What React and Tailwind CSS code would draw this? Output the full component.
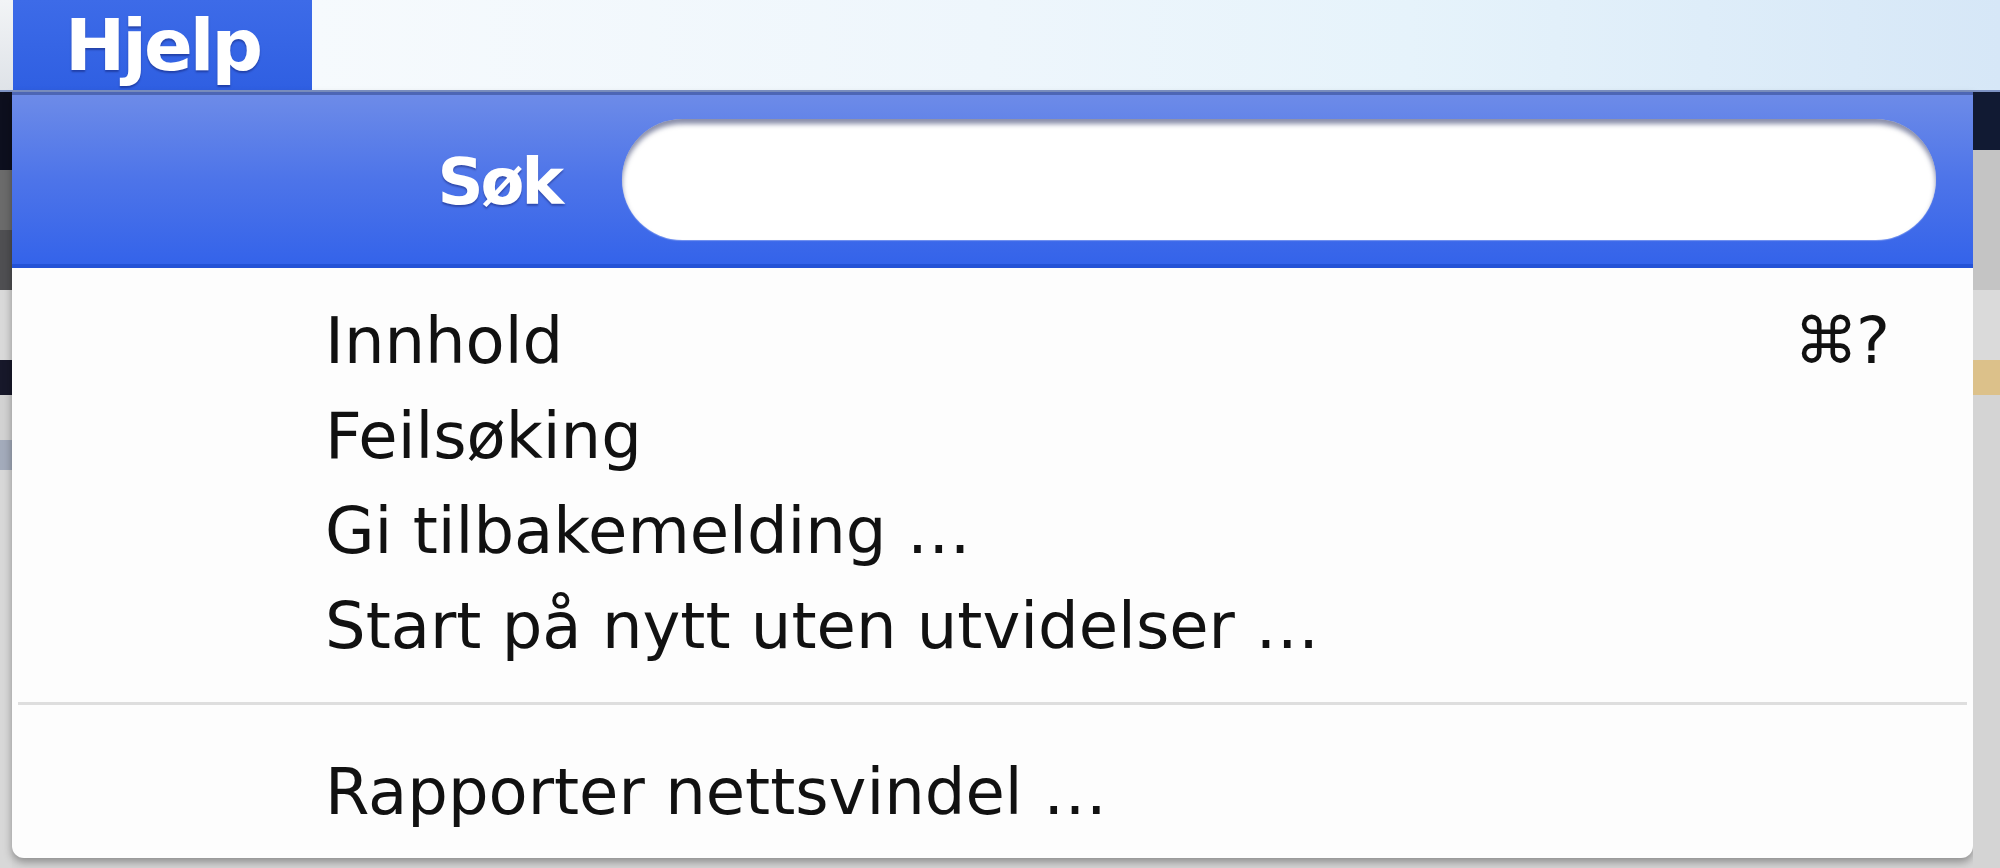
import React from "react";

const items = [
  { label: "Innhold", shortcut: "⌘?" },
  { label: "Feilsøking" },
  { label: "Gi tilbakemelding …" },
  { label: "Start på nytt uten utvidelser …" },
];

function Row({ label, shortcut }) {
  return (
    <div className="flex h-[95px] items-center justify-between pl-[313px] pr-[85px] text-[64px] leading-[95px] text-[#111111]">
      <span>{label}</span>
      {shortcut ? <span className="tracking-[-2px]">{shortcut}</span> : null}
    </div>
  );
}

export default function App() {
  return (
    <div
      className="flex h-[868px] w-[2000px] flex-col overflow-hidden bg-[#d6d6d6]"
      style={{ fontFamily: '"DejaVu Sans", "Noto Sans", sans-serif' }}
    >
      {/* menu bar */}
      <div className="flex h-[92px] shrink-0 border-b-[2px] border-[#7e93c4]">
        <div className="w-[13px] bg-gradient-to-b from-[#f2f4f6] to-[#dfe3e8]" />
        <div className="w-[299px] overflow-hidden bg-gradient-to-b from-[#3d6be8] to-[#2f5fe2] pl-[52px] pt-[9px]">
          <span className="block text-[72px] font-bold leading-none tracking-[-3px] text-white [text-shadow:0_2px_2px_rgba(0,0,60,0.35)]">
            Hjelp
          </span>
        </div>
        <div className="flex-1 bg-[linear-gradient(90deg,#f6fafd_0%,#eef6fc_40%,#e6f3fb_65%,#d6e7f7_100%)]" />
      </div>

      <div className="flex flex-1">
        {/* left background strip */}
        <div className="flex w-[12px] flex-col">
          <div className="h-[78px] bg-[#0d0f1e]" />
          <div className="h-[60px] bg-[#6b6b6b]" />
          <div className="h-[60px] bg-[#4f4f52]" />
          <div className="h-[70px] bg-[#d9d9d9]" />
          <div className="h-[35px] bg-[#17182a]" />
          <div className="h-[45px] bg-[#d2d2d2]" />
          <div className="h-[30px] bg-[#a3abbb]" />
          <div className="flex-1 bg-[#d8d8d8]" />
        </div>

        {/* the menu */}
        <div className="flex w-[1961px] flex-col">
          <div className="flex h-[766px] flex-col overflow-hidden rounded-b-[12px] bg-[#fdfdfd] shadow-[0_4px_8px_rgba(0,0,0,0.35)]">
            {/* search header */}
            <div className="flex h-[176px] shrink-0 items-start border-t-[3px] border-b-[4px] border-t-[#4d66b4] border-b-[#2452d6] bg-gradient-to-b from-[#6d8be8] via-[#4d74e9] to-[#3463ea] pt-[24px]">
              <div className="flex h-[121px] w-[549px] items-center justify-end">
                <span className="mt-[5px] text-[64px] font-bold leading-none tracking-[-3px] text-white [text-shadow:0_2px_2px_rgba(0,0,60,0.35)]">
                  Søk
                </span>
              </div>
              <div className="ml-[61px] mr-[37px] h-[121px] flex-1 rounded-full bg-white shadow-[inset_0_5px_5px_rgba(40,50,100,0.55),0_1px_1px_rgba(255,255,255,0.3)]" />
            </div>

            {/* items */}
            <div className="flex flex-col pt-[26px]">
              {items.map((it) => (
                <Row key={it.label} label={it.label} shortcut={it.shortcut} />
              ))}
              <div className="mx-[6px] mb-[40px] mt-[28px] h-[3px] bg-[#dedede]" />
              <Row label="Rapporter nettsvindel …" />
            </div>
          </div>
        </div>

        {/* right background strip */}
        <div className="flex flex-1 flex-col">
          <div className="h-[58px] bg-[#111a33]" />
          <div className="h-[140px] bg-[#c4c4c4]" />
          <div className="h-[70px] bg-[#dadada]" />
          <div className="h-[35px] bg-[#dcc18a]" />
          <div className="flex-1 bg-[#d4d4d4]" />
        </div>
      </div>
    </div>
  );
}
